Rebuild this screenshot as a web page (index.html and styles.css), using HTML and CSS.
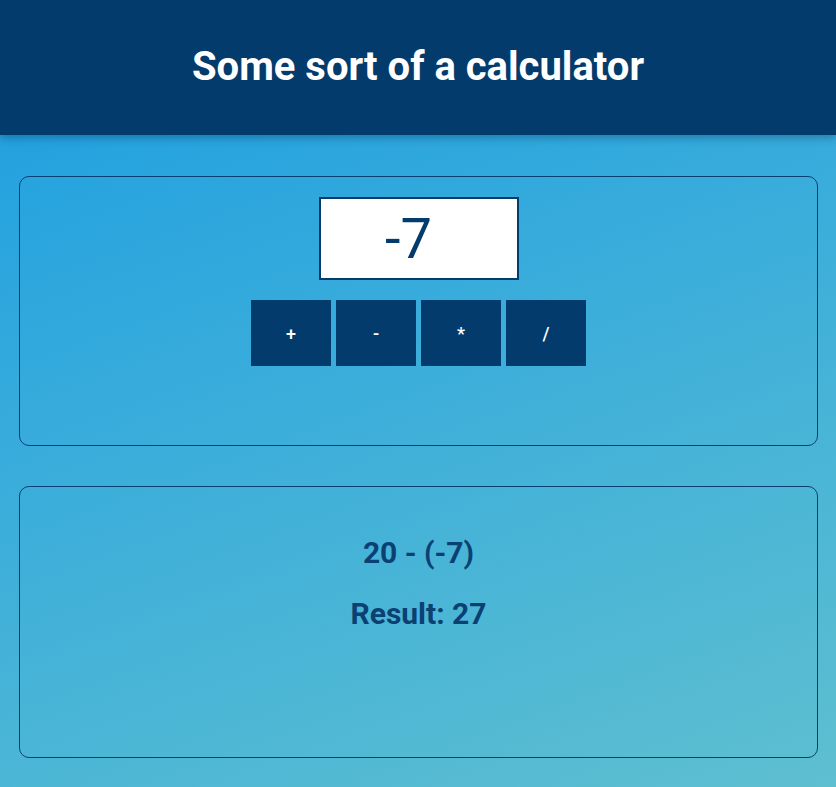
FILE: index.html
```html
<!DOCTYPE html>
<html>
<head>
<meta charset="utf-8">
<link rel="stylesheet" href="styles.css">
</head>
<body>
<header class="header"><h1 class="title">Some sort of a calculator</h1></header>
<main class="main">
  <section class="card card-input">
    <div class="display">-7</div>
    <div class="ops">
      <button class="op">+</button>
      <button class="op">-</button>
      <button class="op">*</button>
      <button class="op">/</button>
    </div>
  </section>
  <section class="card card-result">
    <p class="expr">20 - (-7)</p>
    <p class="result">Result: 27</p>
  </section>
</main>
</body>
</html>
```
FILE: styles.css
```css
html, body { margin: 0; padding: 0; height: 100%; }
body {
  font-family: Roboto, "Liberation Sans", sans-serif;
  background: linear-gradient(160deg, #1b9de0 0%, #3aaddb 45%, #5ebfd0 100%);
  min-height: 787px;
}
.header {
  background: #033b6c;
  height: 135px;
  display: flex;
  align-items: center;
  justify-content: center;
  box-shadow: 0 3px 8px rgba(0, 40, 80, 0.35);
  position: relative;
}
.title {
  margin: 0;
  color: #fff;
  font-size: 40px;
  font-weight: 700;
  letter-spacing: 0;
  padding-bottom: 3px;
}
.main {
  padding: 41px 18px 0 19px;
  display: flex;
  flex-direction: column;
  gap: 40px;
}
.card {
  border: 1px solid #0b3f70;
  border-radius: 10px;
  box-sizing: border-box;
}
.card-input {
  height: 270px;
  padding-top: 20px;
  display: flex;
  flex-direction: column;
  align-items: center;
}
.display {
  width: 200px;
  height: 83px;
  box-sizing: border-box;
  border: 2px solid #033b6c;
  background: #fff;
  color: #033b6c;
  font-size: 56px;
  font-weight: 400;
  display: flex;
  align-items: center;
  justify-content: center;
  padding-right: 20px;
  line-height: 1;
}
.ops {
  margin-top: 20px;
  display: flex;
  gap: 5px;
}
.op {
  width: 80px;
  height: 66px;
  background: #033b6c;
  color: #fff;
  border: none;
  font-family: Roboto, "Liberation Sans", sans-serif;
  font-size: 18px;
  font-weight: 500;
  padding: 0;
}
.card-result {
  height: 272px;
  padding-top: 48px;
  text-align: center;
  color: #0b4172;
}
.expr, .result {
  margin: 0;
  font-size: 30px;
  font-weight: 700;
  line-height: 1.2;
}
.result { margin-top: 25px; }
```
